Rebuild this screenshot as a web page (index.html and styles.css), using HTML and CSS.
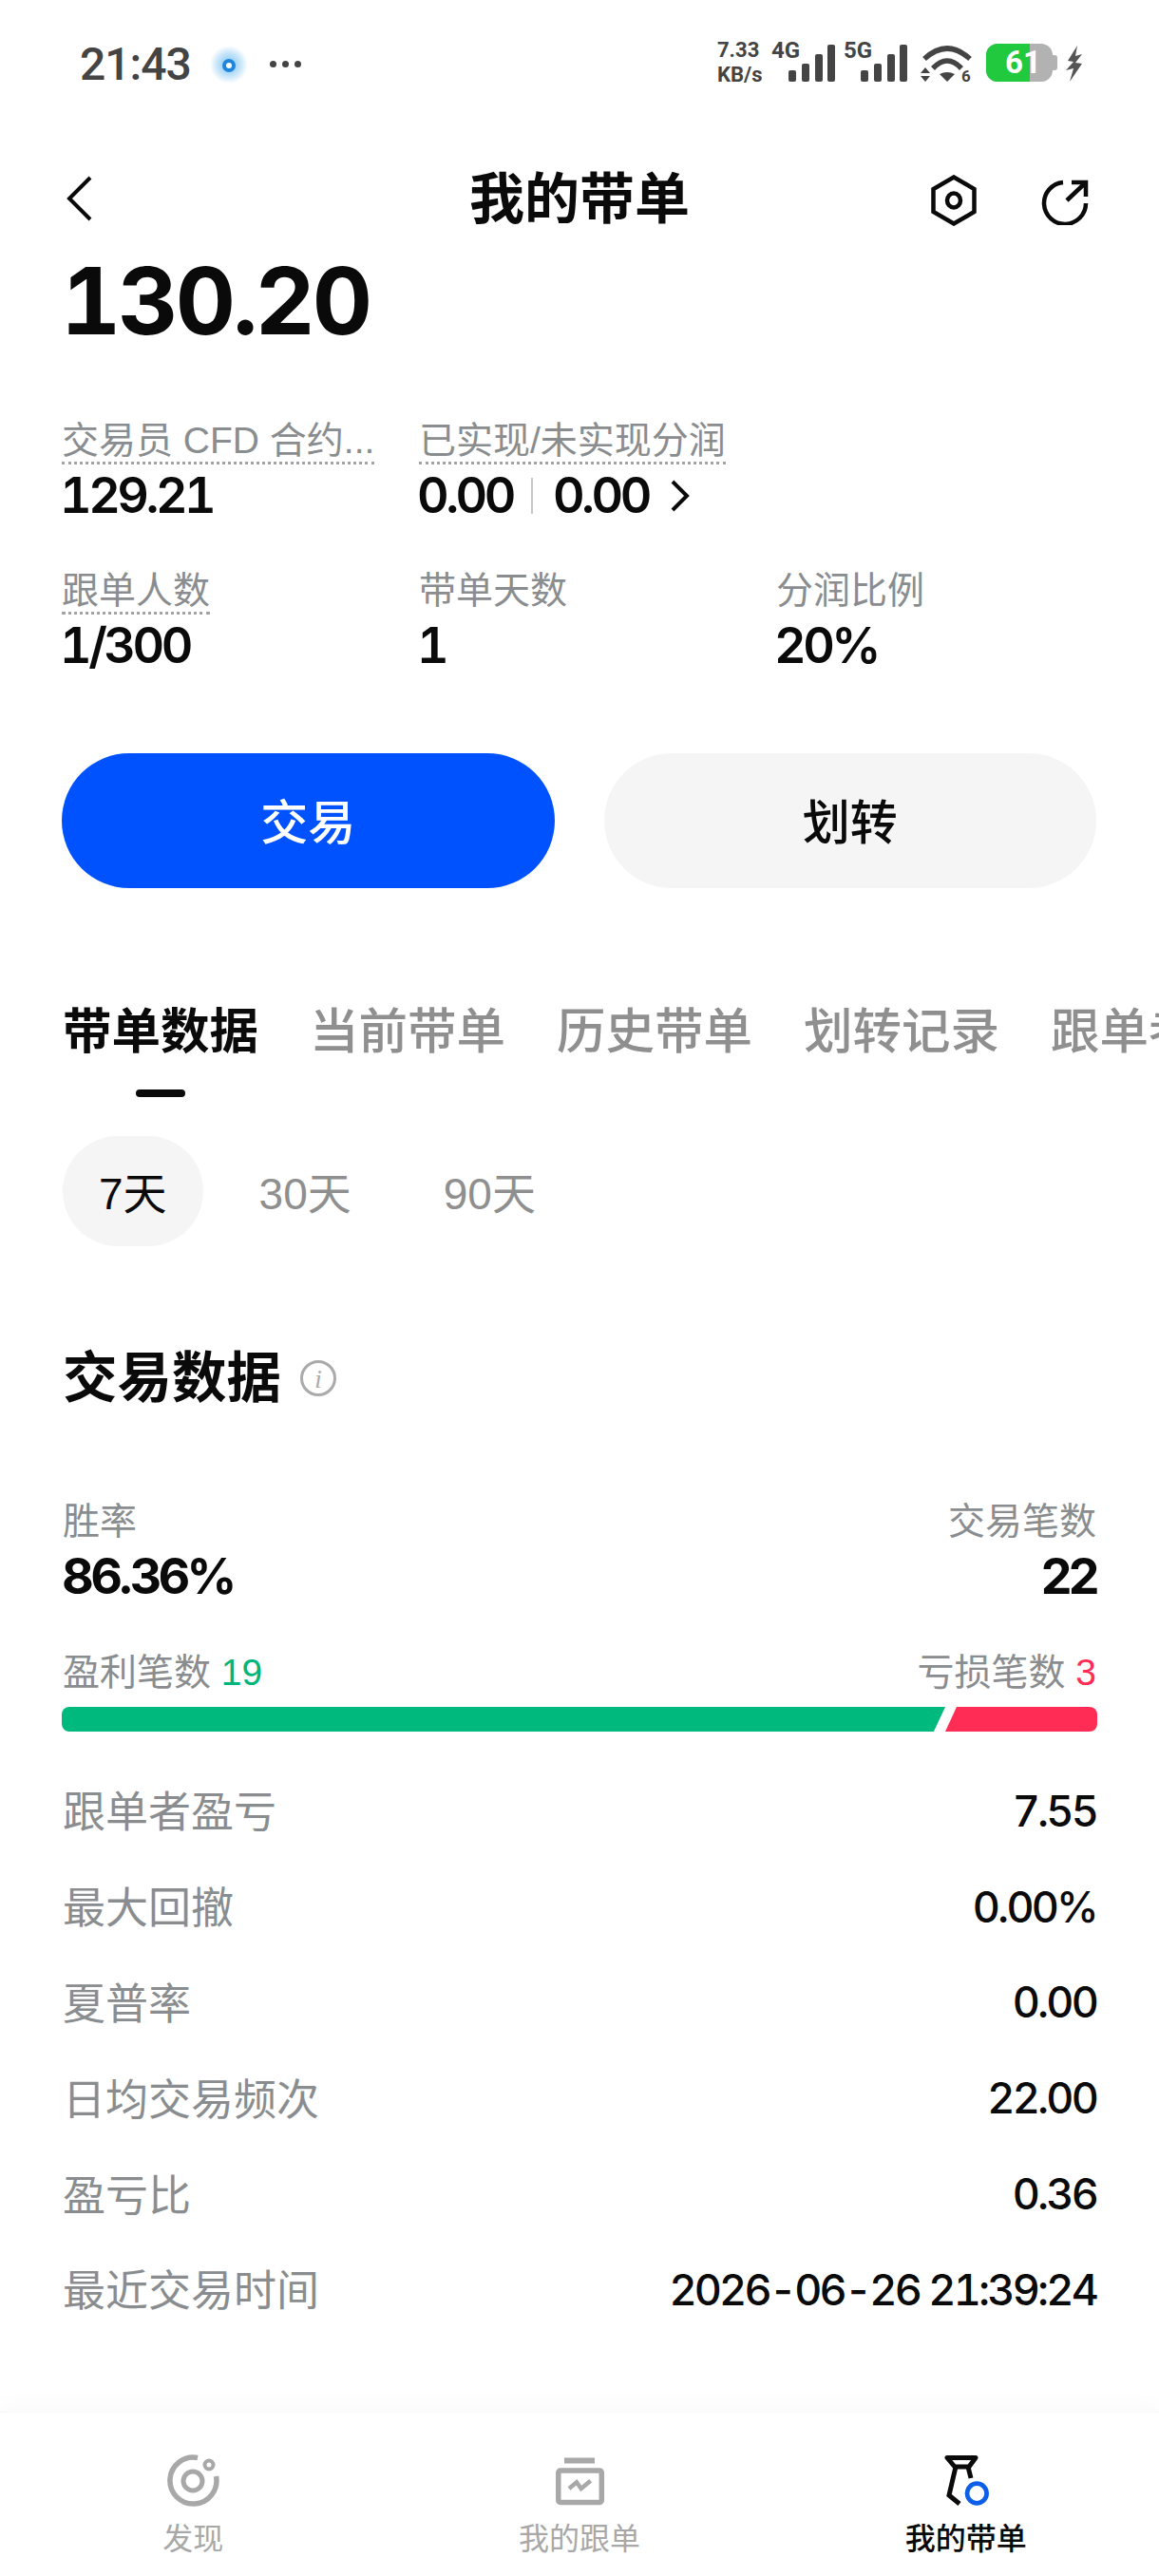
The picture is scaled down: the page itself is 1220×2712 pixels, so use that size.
FILE: index.html
```html
<!DOCTYPE html>
<html lang="zh">
<head>
<meta charset="utf-8">
<title>我的带单</title>
<link rel="stylesheet" href="styles.css">
</head>
<body>
<div class="app">
  <div class="status">
    <div class="status-left">
      <span class="clock">21:43</span>
      <svg class="mascot" viewBox="0 0 40 40"><defs><radialGradient id="glow"><stop offset="0" stop-color="#7cc4f4"/><stop offset=".6" stop-color="#c4e4f9"/><stop offset="1" stop-color="#fff"/></radialGradient></defs><circle cx="20" cy="20" r="20" fill="url(#glow)"/><circle cx="20" cy="21" r="7" fill="#1f86e0"/><circle cx="20" cy="21" r="3" fill="#fff"/></svg>
      <span class="dots"><i></i><i></i><i></i></span>
    </div>
    <div class="status-right">
      <div class="speed"><span>7.33</span><span>KB/s</span></div>
      <div class="signal sig4"><span class="net">4G</span><svg viewBox="0 0 49 39"><rect x="0" y="27" width="8" height="12" rx="2"/><rect x="14" y="20" width="8" height="19" rx="2"/><rect x="28" y="10" width="8" height="29" rx="2"/><rect x="41" y="0" width="8" height="39" rx="2"/></svg></div>
      <div class="signal sig5"><span class="net">5G</span><svg viewBox="0 0 49 39"><rect x="0" y="27" width="8" height="12" rx="2"/><rect x="14" y="20" width="8" height="19" rx="2"/><rect x="28" y="10" width="8" height="29" rx="2"/><rect x="41" y="0" width="8" height="39" rx="2"/></svg></div>
      <svg class="wifi" viewBox="0 0 54 38"><path d="M4 14Q28 -8 52 14" fill="none" stroke="#444" stroke-width="5.500"/><path d="M13 24Q28 8 43 24" fill="none" stroke="#444" stroke-width="5.500"/><path d="M20 30Q28 26 36 30L28 38Z" fill="#444"/><path d="M0 29L5 23L10 29ZM0 32H10L5 38Z" fill="#444"/><text x="43" y="38" class="wifi-six">6</text></svg>
      <div class="battery"><div class="batt-body"><span class="batt-fill"></span><span class="batt-num">61</span></div><span class="batt-tip"></span></div>
      <svg class="bolt" viewBox="0 0 18 38"><path d="M12 0L2 16l6 1-8 9 8-2-4 14 13-19-7-1 7-9-7 2z" fill="#555"/></svg>
    </div>
  </div>

  <header class="topbar">
    <svg class="back" viewBox="0 0 28 48"><path d="M25 2L3 24l22 22" fill="none" stroke="#0a0a0a" stroke-width="4"/></svg>
    <h1 class="title">我的带单</h1>
    <svg class="hex" viewBox="0 0 48 54"><path d="M24 2.500L45.500 15v24L24 51.500 2.500 39V15z" fill="none" stroke="#0a0a0a" stroke-width="4.500"/><ellipse cx="24" cy="27" rx="7" ry="7.500" fill="none" stroke="#0a0a0a" stroke-width="4.500"/></svg>
    <svg class="share" viewBox="0 0 50 48"><path d="M23 3A22 22 0 1 0 47 25" fill="none" stroke="#0a0a0a" stroke-width="4.500"/><path d="M27 22L46 4M32 3h15v15" fill="none" stroke="#0a0a0a" stroke-width="4.500"/></svg>
  </header>

  <div class="amount">130.20</div>

  <div class="stats">
    <div class="stat"><span class="label dotted wide">交易员 CFD 合约...</span><span class="value">129.21</span></div>
    <div class="stat"><span class="label dotted">已实现/未实现分润</span><span class="value value-pair">0.00<i class="vsep"></i>0.00<svg class="more" viewBox="0 0 22 36"><path d="M3 3l15 15L3 33" fill="none" stroke="#0a0a0a" stroke-width="4"/></svg></span></div>
    <div class="stat"></div>
    <div class="stat"><span class="label dotted">跟单人数</span><span class="value">1/300</span></div>
    <div class="stat"><span class="label plain">带单天数</span><span class="value">1</span></div>
    <div class="stat"><span class="label plain">分润比例</span><span class="value">20%</span></div>
  </div>

  <div class="actions">
    <button class="btn primary">交易</button>
    <button class="btn secondary">划转</button>
  </div>

  <nav class="tabs">
    <span class="tab active">带单数据</span>
    <span class="tab">当前带单</span>
    <span class="tab">历史带单</span>
    <span class="tab">划转记录</span>
    <span class="tab">跟单者</span>
  </nav>

  <div class="chips">
    <span class="chip on">7天</span>
    <span class="chip">30天</span>
    <span class="chip">90天</span>
  </div>

  <h2 class="section">交易数据
    <svg class="info" viewBox="0 0 38 38"><circle cx="19" cy="19" r="17.500" fill="none" stroke="#aaa" stroke-width="3"/><text x="19" y="29" class="info-i">i</text></svg>
  </h2>

  <div class="pair p-first">
    <div class="col"><span class="label">胜率</span><span class="big">86.36%</span></div>
    <div class="col end"><span class="label">交易笔数</span><span class="big">22</span></div>
  </div>

  <div class="pl-head">
    <span class="label">盈利笔数 <b class="win">19</b></span>
    <span class="label">亏损笔数 <b class="loss">3</b></span>
  </div>
  <div class="bar"><span class="bar-win"></span><span class="bar-loss"></span></div>

  <div class="rows">
    <div class="row"><span>跟单者盈亏</span><b>7.55</b></div>
    <div class="row"><span>最大回撤</span><b>0.00%</b></div>
    <div class="row"><span>夏普率</span><b>0.00</b></div>
    <div class="row"><span>日均交易频次</span><b>22.00</b></div>
    <div class="row"><span>盈亏比</span><b>0.36</b></div>
    <div class="row"><span>最近交易时间</span><b>2026-06-26 21:39:24</b></div>
  </div>

  <footer class="bottom">
    <div class="nav-item">
      <svg class="nav-icon" viewBox="0 0 56 56"><path d="M33 3.500A24.500 24.500 0 1 0 52.500 23" fill="none" stroke="#a8a8a8" stroke-width="5.500"/><circle cx="28" cy="28" r="10" fill="none" stroke="#a8a8a8" stroke-width="5"/><circle cx="45" cy="11" r="4.500" fill="none" stroke="#a8a8a8" stroke-width="4"/></svg>
      <span>发现</span>
    </div>
    <div class="nav-item">
      <svg class="nav-icon" viewBox="0 0 56 56"><rect x="12" y="3.500" width="32" height="6" fill="#a8a8a8"/><rect x="5.800" y="17" width="45.500" height="33.500" rx="2" fill="none" stroke="#a8a8a8" stroke-width="5.500"/><path d="M17 36l8-6.700 4.700 6.700 10-8.300" fill="none" stroke="#a8a8a8" stroke-width="4.500"/></svg>
      <span>我的跟单</span>
    </div>
    <div class="nav-item current">
      <svg class="nav-icon" viewBox="0 0 56 56"><path d="M8 3.500H38L31 13H16Z" fill="none" stroke="#0a0a0a" stroke-width="5" stroke-linejoin="round"/><path d="M17 13L10 43L21 52M30 13L33 25" fill="none" stroke="#0a0a0a" stroke-width="5"/><circle cx="39.300" cy="41" r="10.300" fill="none" stroke="#0d5fe8" stroke-width="4.700"/></svg>
      <span>我的带单</span>
    </div>
  </footer>
</div>
</body>
</html>
```

FILE: styles.css
```css
* { box-sizing: border-box; }
html, body { margin: 0; padding: 0; background: #fff; }
body { font-family: "Liberation Sans", "Noto Sans CJK SC", sans-serif; color: #0a0a0a; }
.app { width: 1220px; height: 2712px; overflow: hidden; display: flex; flex-direction: column; position: relative; }

.status { height: 100px; padding: 43px 80px 0 84px; display: flex; justify-content: space-between; flex: none; }
.status-left { display: flex; align-items: flex-start; height: 45px; }
.clock { font-family: Roboto, sans-serif; font-weight: 500; font-size: 48px; line-height: 50px; color: #444; letter-spacing: -1px; }
.mascot { width: 40px; height: 40px; margin: 5px 0 0 20px; }
.dots { display: flex; gap: 6px; margin: 21px 0 0 23px; }
.dots i { width: 7px; height: 7px; border-radius: 50%; background: #444; }
.status-right { display: flex; align-items: flex-start; }
.speed { display: flex; flex-direction: column; font-weight: 700; font-size: 22px; line-height: 26px; color: #444; width: 57px; margin-top: -3px; font-family: Roboto, sans-serif; }
.signal { position: relative; width: 49px; height: 43px; margin-top: 4px; }
.signal svg { display: block; width: 49px; height: 39px; fill: #444; position: absolute; left: 0; top: 0; }
.net { position: absolute; top: -6px; left: -18px; font: 700 24px/24px Roboto, sans-serif; color: #444; }
.sig4 { margin-left: 18px; }
.sig5 { margin-left: 27px; }
.wifi { width: 54px; height: 38px; margin: 5px 0 0 14px; overflow: visible; }
.wifi-six { font: 700 17px Roboto, sans-serif; fill: #444; }
.battery { display: flex; align-items: center; margin: 3px 0 0 15px; height: 40px; }
.batt-body { width: 70px; height: 40px; border-radius: 12px; background: #b2b2b2; overflow: hidden; position: relative; }
.batt-fill { position: absolute; left: 0; top: 0; bottom: 0; width: 46px; background: #21c93f; }
.batt-num { position: absolute; left: 20px; top: 0; font: 700 33px/40px Roboto, sans-serif; color: #fff; }
.batt-tip { width: 5px; height: 16px; background: #b2b2b2; border-radius: 0 3px 3px 0; }
.bolt { width: 18px; height: 38px; margin: 5px 0 0 9px; }

.topbar { height: 70px; margin-top: 74px; position: relative; display: flex; align-items: center; justify-content: center; flex: none; }
.topbar svg { position: absolute; }
.title { margin: 2px 0 0; font-size: 58px; line-height: 70px; font-weight: 700; }
.back { left: 70px; top: 11px; width: 28px; height: 48px; }
.hex { left: 980px; top: 10px; width: 48px; height: 54px; }
.share { left: 1096px; top: 15px; width: 50px; height: 48px; }

.amount { padding-left: 64px; font-family: Inter, "Liberation Sans", sans-serif; font-variant-numeric: tabular-nums; font-size: 98px; font-weight: 700; line-height: 104px; letter-spacing: -3px; margin-top: 21px; flex: none; }

.stats { display: grid; grid-template-columns: repeat(3, 376px); row-gap: 50px; padding-left: 65px; margin-top: 73px; flex: none; }
.stat { display: flex; flex-direction: column; align-items: flex-start; }
.label { font-size: 39px; line-height: 44px; color: #8a8d8f; white-space: nowrap; }
.dotted { border-bottom: 3px dotted #a3a3a3; }
.plain { border-bottom: 3px solid transparent; }
.wide { width: 329px; }
.value { font-family: Inter, "Liberation Sans", sans-serif; font-variant-numeric: tabular-nums; font-size: 52px; line-height: 56px; font-weight: 600; letter-spacing: -3.500px; margin-top: 5px; margin-left: -2px; }
.value-pair { display: flex; align-items: center; }
.vsep { width: 2px; height: 38px; background: #c8c8c8; margin: 0 21px 0 19px; }
.more { width: 22px; height: 36px; margin-left: 22px; }

.actions { display: flex; gap: 52px; padding: 0 66px 0 65px; margin-top: 85px; flex: none; }
.btn { flex: 1; height: 142px; border: 0; border-radius: 71px; padding: 0 0 4px; font-family: inherit; font-size: 50px; font-weight: 500; }
.primary { background: #0052ff; color: #fff; }
.secondary { background: #f5f5f5; color: #0a0a0a; }

.tabs { display: flex; gap: 54px; padding: 2px 0 0 66px; margin-top: 116px; white-space: nowrap; overflow: hidden; height: 145px; flex: none; }
.tab { font-size: 51.500px; line-height: 66px; height: 110px; font-weight: 500; color: #8f8f8f; position: relative; flex: none; }
.tab.active { color: #0a0a0a; font-weight: 700; }
.tab.active::after { content: ""; position: absolute; left: 77px; width: 52px; height: 8px; border-radius: 4px; background: #0a0a0a; top: 94px; }

.chips { display: flex; gap: 21px; padding-left: 66px; align-items: center; height: 116px; flex: none; }
.chip { height: 116px; padding: 0 38px 3px; display: flex; align-items: center; justify-content: center; font-size: 46px; color: #8f8f8f; border-radius: 58px; }
.chip.on { background: #f5f5f5; color: #0a0a0a; }

.section { margin: 104px 0 0 66px; height: 70px; font-size: 57.500px; line-height: 70px; font-weight: 700; display: flex; align-items: center; gap: 20px; flex: none; }
.info { width: 38px; height: 38px; }
.info-i { font: italic 400 27px "Liberation Serif", serif; fill: #aaa; text-anchor: middle; }

.pair { display: flex; justify-content: space-between; padding: 0 66px; flex: none; }
.p-first { margin-top: 94px; }
.col { display: flex; flex-direction: column; }
.col.end { align-items: flex-end; }
.big { font-family: Inter, "Liberation Sans", sans-serif; font-size: 52px; line-height: 62px; font-weight: 700; letter-spacing: -3.600px; margin-top: 5px; margin-left: -1px; }
.pl-head { display: flex; justify-content: space-between; padding: 0 66px; margin-top: 48px; flex: none; }
.win, .loss { font-weight: 400; }
.win { color: #00b57a; }
.loss { color: #ff2d55; }
.bar { margin: 14px 65px 0; height: 26px; display: flex; position: relative; flex: none; }
.bar-win { width: 930px; background: #00b97c; border-radius: 8px 0 0 8px; clip-path: polygon(0 0, 100% 0, 98.700% 100%, 0 100%); }
.bar-loss { position: absolute; left: 930px; right: 0; top: 0; bottom: 0; background: #ff2d55; border-radius: 0 8px 8px 0; clip-path: polygon(7.500% 0, 100% 0, 100% 100%, 0 100%); }

.rows { display: flex; flex-direction: column; padding: 0 66px; margin-top: 33px; flex: none; }
.row { height: 100.800px; display: flex; justify-content: space-between; align-items: center; font-size: 45px; color: #8a8d8f; }
.row span { margin-bottom: 3px; }
.row b { font-family: Inter, "Liberation Sans", sans-serif; font-variant-numeric: tabular-nums; font-weight: 500; color: #0a0a0a; letter-spacing: -2.800px; }

.bottom { margin-top: auto; height: 173px; border-top: 1px solid #f7f7f7; box-shadow: 0 -10px 20px rgba(0,0,0,.02); display: grid; grid-template-columns: repeat(3, 1fr); padding-top: 44px; flex: none; }
.nav-item { display: flex; flex-direction: column; align-items: center; font-size: 32px; line-height: 38px; color: #a8a8a8; gap: 14px; }
.nav-icon { width: 56px; height: 56px; }
.current { color: #0a0a0a; font-weight: 500; }
```
